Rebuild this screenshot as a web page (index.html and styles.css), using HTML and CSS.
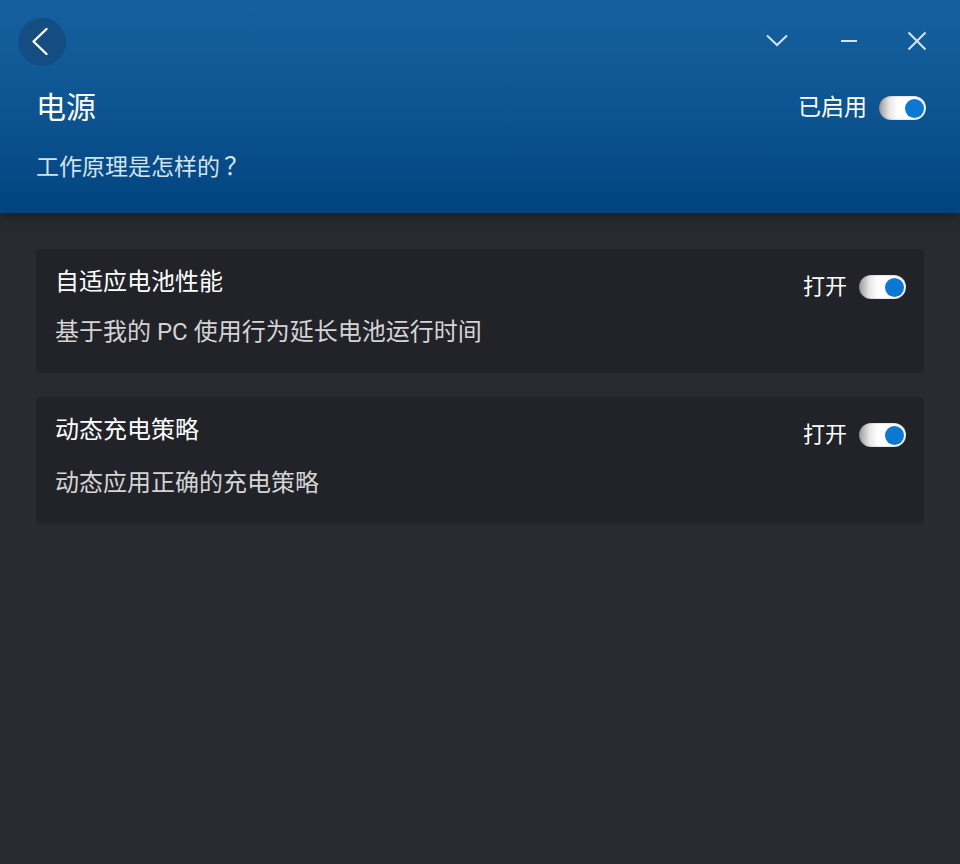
FILE: index.html
```html
<!DOCTYPE html>
<html lang="zh-CN">
<head>
<meta charset="utf-8">
<link rel="stylesheet" href="styles.css">
</head>
<body>
<div class="app">
  <header class="hero">
    <div class="topbar">
      <button class="back" aria-label="返回">
        <svg width="48" height="48" viewBox="0 0 48 48"><path d="M28.5 11 L15.5 23.5 L28.5 36" fill="none" stroke="#fff" stroke-width="2.4" stroke-linecap="round" stroke-linejoin="round"/></svg>
      </button>
      <div class="winctl">
        <svg class="ic chev" width="24" height="24" viewBox="0 0 24 24"><path d="M2 6.5 L12 16 L22 6.5" fill="none" stroke="#d6e4f2" stroke-width="2"/></svg>
        <svg class="ic min" width="24" height="24" viewBox="0 0 24 24"><path d="M4 12 H20" fill="none" stroke="#d6e4f2" stroke-width="2"/></svg>
        <svg class="ic" width="24" height="24" viewBox="0 0 24 24"><path d="M3.5 3.5 L20.5 20.5 M20.5 3.5 L3.5 20.5" fill="none" stroke="#d6e4f2" stroke-width="2"/></svg>
      </div>
    </div>
    <div class="titlerow">
      <h1 class="title">电源</h1>
      <div class="state"><span>已启用</span><span class="toggle"><span class="knob"></span></span></div>
    </div>
    <p class="how">工作原理是怎样的<span class="fw">？</span></p>
  </header>
  <main class="content">
    <section class="card">
      <div class="cardhead">
        <h2 class="cardtitle">自适应电池性能</h2>
        <div class="state"><span>打开</span><span class="toggle"><span class="knob"></span></span></div>
      </div>
      <p class="desc">基于我的 PC 使用行为延长电池运行时间</p>
    </section>
    <section class="card">
      <div class="cardhead">
        <h2 class="cardtitle">动态充电策略</h2>
        <div class="state"><span>打开</span><span class="toggle"><span class="knob"></span></span></div>
      </div>
      <p class="desc desc-loose">动态应用正确的充电策略</p>
    </section>
  </main>
</div>
</body>
</html>
```
FILE: styles.css
```css
* { box-sizing: border-box; }
html, body { margin: 0; padding: 0; }
body {
  width: 960px;
  height: 864px;
  background: #282c31;
  font-family: Roboto, "Noto Sans CJK SC", sans-serif;
  color: #fff;
  overflow: hidden;
}
.app { display: flex; flex-direction: column; height: 864px; }
.hero {
  height: 213px;
  background: linear-gradient(180deg, #17609f 0%, #0d5592 50%, #01447f 100%);
  padding: 18px 34px 0 18px;
  position: relative;
  z-index: 1;
  box-shadow: 0 2px 14px rgba(0,0,0,0.45);
}
.topbar { display: flex; justify-content: space-between; align-items: center; height: 48px; }
.back {
  width: 48px; height: 48px; border-radius: 50%;
  border: none; padding: 0;
  background: #134d82;
  display: block;
}
.back svg { display: block; }
.winctl { display: flex; align-items: center; margin-top: -2px; margin-right: -3px; }
.winctl .ic { display: block; }
.winctl .chev { margin-right: 48px; }
.winctl .min { margin-right: 44px; }
.titlerow {
  display: flex; justify-content: space-between; align-items: center;
  margin-top: 23px; padding-left: 18px;
}
.title { margin: 0; font-size: 30px; font-weight: 400; line-height: 38px; }
.state { display: flex; align-items: center; gap: 12px; font-size: 23px; line-height: 30px; }
.toggle {
  width: 47px; height: 24px; border-radius: 12px;
  background: linear-gradient(90deg, #9a9a9a 0%, #e6e6e6 22%, #ffffff 40%, #ffffff 100%);
  box-shadow: inset 0 0 2px rgba(0,0,0,0.35);
  position: relative;
  display: inline-block;
}
.knob {
  position: absolute; right: 2px; top: 2.5px;
  width: 19px; height: 19px; border-radius: 50%;
  background: #0b78d3;
}
.how { margin: 26px 0 0 18px; font-size: 23px; line-height: 30px; color: #d3e2f0; }
.fw { font-size: 25px; line-height: 0; padding-left: 4px; }
.content { padding: 36px 36px 0 36px; display: flex; flex-direction: column; gap: 24px; }
.card {
  background: #212328;
  border-radius: 5px;
  padding: 17px 18px 25px 19px;
}
.cardhead { display: flex; justify-content: space-between; align-items: flex-start; height: 32px; }
.cardhead .state { margin-top: 6px; font-size: 22px; }
.cardtitle { margin: 0; font-size: 24px; font-weight: 400; line-height: 32px; }
.desc { margin: 18px 0 0 0; font-size: 24px; line-height: 32px; color: #d4d4d4; }
.desc-loose { margin-top: 21px; }
```
